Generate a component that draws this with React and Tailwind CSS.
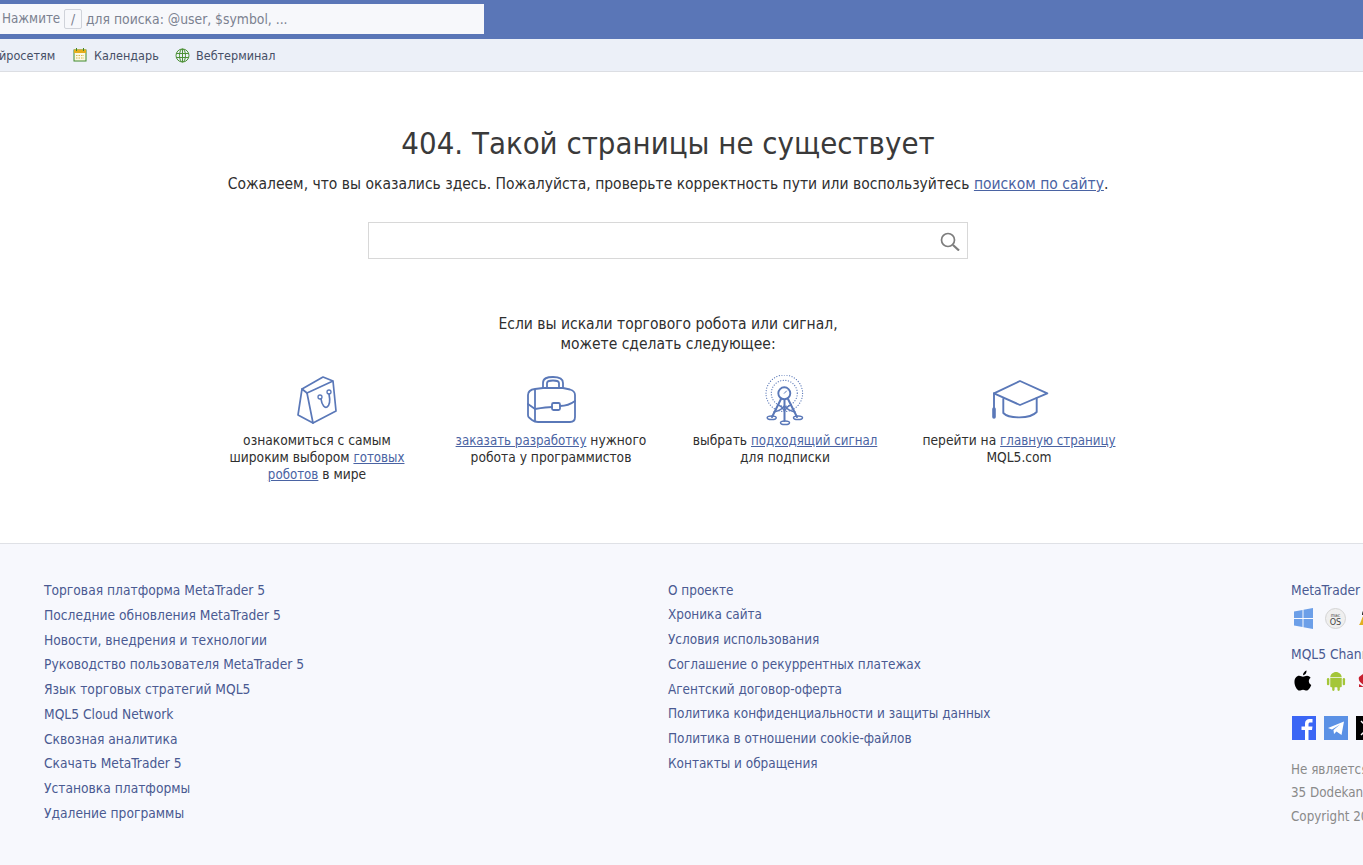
import React from "react";

const leftLinks = [
  "Торговая платформа MetaTrader 5",
  "Последние обновления MetaTrader 5",
  "Новости, внедрения и технологии",
  "Руководство пользователя MetaTrader 5",
  "Язык торговых стратегий MQL5",
  "MQL5 Cloud Network",
  "Сквозная аналитика",
  "Скачать MetaTrader 5",
  "Установка платформы",
  "Удаление программы",
];

const midLinks = [
  "О проекте",
  "Хроника сайта",
  "Условия использования",
  "Соглашение о рекуррентных платежах",
  "Агентский договор-оферта",
  "Политика конфиденциальности и защиты данных",
  "Политика в отношении cookie-файлов",
  "Контакты и обращения",
];

const A = ({ children }) => <a href="#" className="text-[#4a63a3] underline">{children}</a>;
const CapLink = ({ children }) => <a href="#" className="text-[13.200px] text-[#4a63a3] underline">{children}</a>;

const BagIcon = () => (
  <svg width="44" height="50" viewBox="-1 0 44 50" fill="none" stroke="#5a78b8" strokeWidth="1.700" strokeLinejoin="round" strokeLinecap="round">
    <path d="M6 14 L27 2 L37 6 L40 36 L17 48 L11 18 L37 6" />
    <path d="M6 14 L11 18 M6 14 L2 40 L17 48" />
    <circle cx="24" cy="22" r="2" strokeWidth="1.300" />
    <circle cx="33" cy="17" r="2" strokeWidth="1.300" />
    <path d="M25 24 C26 31 29 33 31 32 C34 30 34 24 33 19" />
  </svg>
);

const CaseIcon = () => (
  <svg width="52" height="50" viewBox="-1 0 52 50" fill="none" stroke="#5a78b8" strokeWidth="1.800" strokeLinejoin="round" strokeLinecap="round">
    <path d="M17 13 V8 C17 3 21 2 27 2 C33 2 37 3 37 8 V12 M21 12.500 V8 C21 6 23 5.500 27 5.500 C31 5.500 33 6 33 8 V12" />
    <path d="M9 14 L17 13 H37 L44 14.500 C47.500 15.500 49 17.500 49 20 V42 C49 45 47 47 44 47 H12 C9.500 47 8 46.500 6 45 L3 42.500 C2.300 42 2 41 2 40 V20 C2 16.500 5 14.500 9 14 Z" />
    <path d="M9 15 V46" />
    <path d="M2 29 L9 34 C15 33 21 32 26 32 M34 31 C40 31 45 29 49 26" />
    <rect x="26" y="28" width="8" height="7" rx="1.500" />
  </svg>
);

const TowerIcon = () => (
  <svg width="42" height="52" viewBox="0 1 42 52" fill="none" stroke="#5a78b8" strokeLinecap="round" strokeLinejoin="round">
    <circle cx="20.300" cy="19.300" r="18.300" strokeWidth="1.200" strokeDasharray="0.1 2.500" />
    <circle cx="20.300" cy="19.300" r="13" strokeWidth="1.200" strokeDasharray="0.1 2.500" />
    <circle cx="20.300" cy="19.300" r="6" strokeWidth="1.900" />
    <path d="M20.300 19.300 L22.500 17" strokeWidth="1" />
    <path d="M17 25 L8 43 M24 25 L33 43 M20.500 26 V47" strokeWidth="2" />
    <path d="M10 38 C15 37 18 35 20.500 32 C23 35 26 37 31 38 M14 31 C17 32 19 34 20.500 37 C22 34 24 32 27 31" strokeWidth="1.500" />
    <ellipse cx="7.700" cy="43.700" rx="4.500" ry="1.800" strokeWidth="1.500" />
    <ellipse cx="34" cy="43.700" rx="4.500" ry="1.800" strokeWidth="1.500" />
    <ellipse cx="21" cy="48.700" rx="4.500" ry="1.800" strokeWidth="1.500" />
  </svg>
);

const CapIcon = () => (
  <svg width="60" height="52" viewBox="-1 -3 60 52" fill="none" stroke="#5a78b8" strokeWidth="1.900" strokeLinejoin="round" strokeLinecap="round">
    <path d="M4 15.300 L30 3 L57.300 15.300 L30 27 Z" />
    <path d="M13.300 21 V35 C19 41 40 41 46.700 34 V20" />
    <path d="M4 15.300 V32" />
    <path d="M4 31 V39" strokeWidth="3.600" />
  </svg>
);

export default function App() {
  return (
    <div className="w-[1363px] h-[865px] overflow-hidden bg-white flex flex-col font-['Tahoma','DejaVu_Sans_Condensed','Noto_Sans',sans-serif] text-[#2f2f2f]">
      <div className="h-[39px] bg-[#5a76b7] pt-1 shrink-0">
        <div className="w-[484px] h-[30px] bg-[#f7f8fb] flex items-center pl-[2px] text-[13.800px] text-[#7b8190]">
          <span className="w-[62px] text-[13.300px]">Нажмите</span>
          <span className="w-[18px] h-[20px] border border-[#d0d3da] rounded-[2px] flex items-center justify-center">/</span>
          <span className="ml-[4px]">для поиска: @user, $symbol, ...</span>
        </div>
      </div>
      <div className="h-[33px] bg-[#ecf0f8] border-b border-[#dcdee3] flex items-center pt-[2px] shrink-0 text-[12.500px] text-[#464f66]">
        <span className="w-[56px] shrink-0 -ml-[1px]">йросетям</span>
        <svg className="ml-[18px] -mt-[2px]" width="14" height="14" viewBox="0 0 14 14">
          <rect x="1" y="2" width="12" height="11" fill="#fbf9e2" stroke="#3f8a2c" strokeWidth="1" />
          <rect x="1" y="1.500" width="12" height="3.500" fill="#e5ae1c" />
          <path d="M3.500 0 V3 M10.500 0 V3" stroke="#3f8a2c" strokeWidth="1" />
          <path d="M3 7.500 H11 M3 10 H11" stroke="#d7b64c" strokeWidth="1" strokeDasharray="1.500 1" />
        </svg>
        <span className="ml-[7px] w-[65px]">Календарь</span>
        <svg className="ml-[16px] -mt-[1px]" width="15" height="15" viewBox="0 0 15 15" fill="none" stroke="#4d9136" strokeWidth="1">
          <circle cx="7.500" cy="7.500" r="6.500" />
          <ellipse cx="7.500" cy="7.500" rx="3" ry="6.500" />
          <path d="M7.500 1 V14 M1.200 5.500 H13.800 M1.200 9.500 H13.800" />
        </svg>
        <span className="ml-[6px]">Вебтерминал</span>
      </div>

      <main className="flex-1 flex flex-col items-center pr-[27px]">
        <h1 className="mt-[51px] text-[30.850px] leading-[40px] text-[#3a3a3a]">404. Такой страницы не существует</h1>
        <p className="mt-[11px] text-[15.500px] leading-[20px]">
          Сожалеем, что вы оказались здесь. Пожалуйста, проверьте корректность пути или воспользуйтесь <A>поиском по сайту</A>.
        </p>
        <div className="mt-[28px] w-[600px] h-[37px] border border-[#d8d8d8] flex items-center justify-end pr-[7px]">
          <svg width="20" height="20" viewBox="0 0 20 20" fill="none" stroke="#7d7d7d">
            <circle cx="8" cy="9" r="6.500" strokeWidth="1.700" />
            <path d="M13 14 L19 19.500" strokeWidth="2.200" />
          </svg>
        </div>
        <p className="mt-[56px] text-center text-[15.500px] leading-[19.500px]">
          Если вы искали торгового робота или сигнал,<br />можете сделать следующее:
        </p>
        <div className="mt-[21px] flex w-[936px] text-[13.700px] leading-[17px] text-center text-[#2f2f2f]">
          <div className="w-[234px] flex flex-col items-center">
            <div className="h-[52px]"><BagIcon /></div>
            <p className="mt-[5px] w-[190px]">ознакомиться с самым широким выбором <CapLink>готовых роботов</CapLink> в мире</p>
          </div>
          <div className="w-[234px] flex flex-col items-center">
            <div className="h-[52px]"><CaseIcon /></div>
            <p className="mt-[5px] w-[200px]"><CapLink>заказать разработку</CapLink> нужного робота у программистов</p>
          </div>
          <div className="w-[234px] flex flex-col items-center">
            <div className="h-[52px]"><TowerIcon /></div>
            <p className="mt-[5px] w-[200px]">выбрать <CapLink>подходящий сигнал</CapLink> для подписки</p>
          </div>
          <div className="w-[234px] flex flex-col items-center">
            <div className="h-[52px]"><CapIcon /></div>
            <p className="mt-[5px] w-[210px]">перейти на <CapLink>главную страницу</CapLink> MQL5.com</p>
          </div>
        </div>
      </main>

      <footer className="h-[322px] shrink-0 bg-[#f7f8fd] border-t border-[#dfe1e6] pt-[34px] pl-[44px] flex text-[13.700px] leading-[24.750px] text-[#4a5a92]">
        <ul className="w-[624px] shrink-0">
          {leftLinks.map((t) => <li key={t}>{t}</li>)}
        </ul>
        <ul className="w-[623px] shrink-0 pt-[0.6px] text-[13.450px]">
          {midLinks.map((t) => <li key={t}>{t}</li>)}
        </ul>
        <div className="shrink-0 w-[200px]">
          <div>MetaTrader 5</div>
          <div className="mt-[5px] pl-[3px] flex items-center gap-[12px] h-[22px]">
            <svg width="19" height="21" viewBox="0 0 19 21" fill="#6c9fe8">
              <path d="M0 3.500 L8.500 2 V10 H0 Z M9.500 1.800 L19 0 V10 H9.500 Z M0 11 H8.500 V19 L0 17.500 Z M9.500 11 H19 V21 L9.500 19.200 Z" />
            </svg>
            <div className="w-[21px] h-[21px] rounded-full bg-[#efefef] border border-[#d4d4d4] text-[#444] flex flex-col items-center justify-center">
              <span className="text-[5px] leading-[6px]">mac</span>
              <span className="text-[9px] leading-[8px]">OS</span>
            </div>
            <svg width="14" height="20" viewBox="0 0 14 20">
              <path d="M7 6 C10 6 10 12 13 16 H1 C4 12 4 6 7 6 Z" fill="#e2b021" />
              <path d="M7 1 C9 1 10 3 10 6 H4 C4 3 5 1 7 1 Z" fill="#222" />
            </svg>
          </div>
          <div className="mt-[12px]">MQL5 Channels</div>
          <div className="mt-[3px] pl-[3px] flex items-center gap-[14px] h-[22px]">
            <svg width="18" height="21" viewBox="0 0 20 22" preserveAspectRatio="none" fill="#000">
              <path d="M14 0.500 C14 3.500 12 5.500 10 5.400 C10 3 12 1 14 0.500 Z M10 7 C11.500 7 12.500 6 14.500 6 C16 6 17.500 6.800 18.500 8.200 C15.500 10 16 14.500 19.200 15.700 C18 18.500 16 21.500 14 21.500 C12.500 21.500 12 20.600 10 20.600 C8 20.600 7.500 21.500 6 21.500 C3.500 21.500 0.500 16.500 0.500 12.500 C0.500 8.500 3 6 5.700 6 C7.500 6 8.700 7 10 7 Z" />
            </svg>
            <svg width="20" height="21" viewBox="0 0 20 22" fill="#a4c639">
              <path d="M4 7.500 C4 4.500 7 2 10 2 C13 2 16 4.500 16 7.500 Z M4 8.500 H16 V17 C16 17.600 15.600 18 15 18 H5 C4.400 18 4 17.600 4 17 Z" />
              <rect x="0.500" y="8.500" width="2.500" height="7.500" rx="1.200" />
              <rect x="17" y="8.500" width="2.500" height="7.500" rx="1.200" />
              <rect x="6" y="17" width="2.500" height="5" rx="1.200" />
              <rect x="11.500" y="17" width="2.500" height="5" rx="1.200" />
            </svg>
            <svg className="-ml-[2px]" width="16" height="20" viewBox="0 0 16 20" fill="#c8202f"><path d="M5 3 C7 7 7 10 6 14 C2 12 0 9 1 6 Z M1 13 L6 16 L1 16 Z" /></svg>
          </div>
          <div className="mt-[24px] pl-[1px] flex gap-[8px] items-center">
            <div className="w-[24px] h-[24px] bg-[#3b66f5] overflow-hidden">
              <svg width="24" height="24" viewBox="0 0 24 24" fill="#fff"><path d="M13 24 V14 H9.500 V10.500 H13 V7.500 C13 4.500 15 3 17.500 3 H20.500 V6.500 H18.500 C17 6.500 16.500 7 16.500 8.500 V10.500 H20.500 L20 14 H16.500 V24 Z" /></svg>
            </div>
            <div className="w-[24px] h-[24px] bg-[#5b91e5]">
              <svg width="24" height="24" viewBox="0 0 24 24" fill="#fff"><path d="M4 12 L20 5.500 L17.500 19 L12.500 15.500 L10 18 L9.500 14 L16 8.500 L8 13.500 Z" /></svg>
            </div>
            <div className="w-[24px] h-[24px] bg-black">
              <svg width="24" height="24" viewBox="0 0 24 24" fill="none" stroke="#fff" strokeWidth="1.500"><path d="M5 5 L19 19 M19 5 L5 19" /></svg>
            </div>
          </div>
          <div className="mt-[18px] text-[13.300px] leading-[23.500px] text-[#8a8a8a]">
            <div>Не является банком</div>
            <div>35 Dodekanisou</div>
            <div>Copyright 2000</div>
          </div>
        </div>
      </footer>
    </div>
  );
}
